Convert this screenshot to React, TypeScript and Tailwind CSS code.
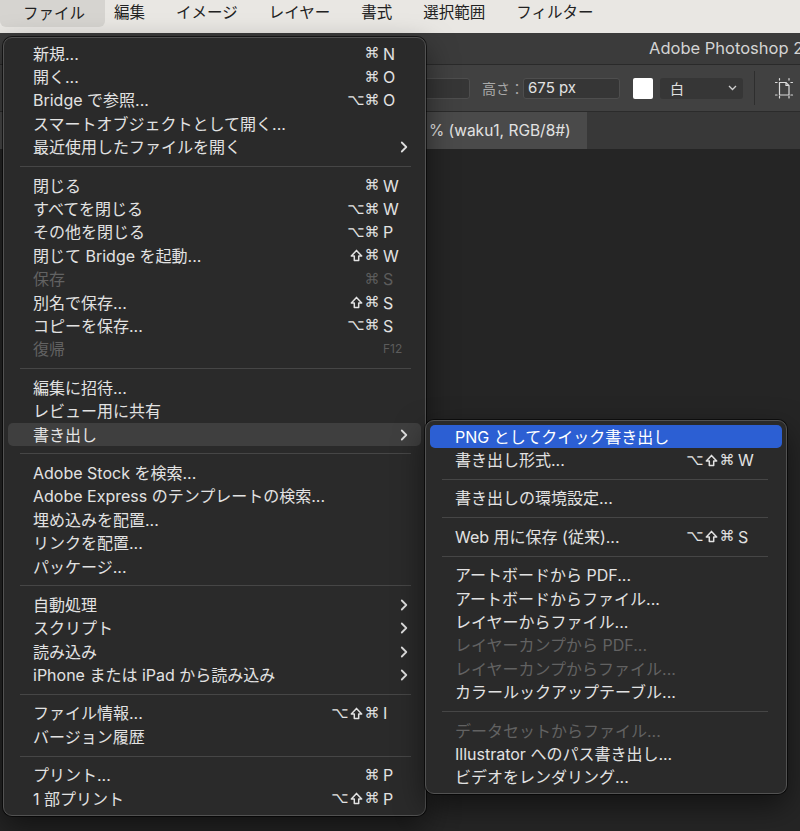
import React from 'react';

type Item =
  | { sep: true }
  | {
      sep?: false;
      label: string;
      mods?: string;
      keyName?: string;
      small?: boolean;
      sub?: boolean;
      disabled?: boolean;
      active?: 'grey' | 'blue';
    };

const SEP: Item = { sep: true };

const fileMenu: Item[] = [
  { label: '新規...', mods: '⌘', keyName: 'N' },
  { label: '開く...', mods: '⌘', keyName: 'O' },
  { label: 'Bridge で参照...', mods: '⌥⌘', keyName: 'O' },
  { label: 'スマートオブジェクトとして開く...' },
  { label: '最近使用したファイルを開く', sub: true },
  SEP,
  { label: '閉じる', mods: '⌘', keyName: 'W' },
  { label: 'すべてを閉じる', mods: '⌥⌘', keyName: 'W' },
  { label: 'その他を閉じる', mods: '⌥⌘', keyName: 'P' },
  { label: '閉じて Bridge を起動...', mods: '⇧⌘', keyName: 'W' },
  { label: '保存', mods: '⌘', keyName: 'S', disabled: true },
  { label: '別名で保存...', mods: '⇧⌘', keyName: 'S' },
  { label: 'コピーを保存...', mods: '⌥⌘', keyName: 'S' },
  { label: '復帰', keyName: 'F12', small: true, disabled: true },
  SEP,
  { label: '編集に招待...' },
  { label: 'レビュー用に共有' },
  { label: '書き出し', sub: true, active: 'grey' },
  SEP,
  { label: 'Adobe Stock を検索...' },
  { label: 'Adobe Express のテンプレートの検索...' },
  { label: '埋め込みを配置...' },
  { label: 'リンクを配置...' },
  { label: 'パッケージ...' },
  SEP,
  { label: '自動処理', sub: true },
  { label: 'スクリプト', sub: true },
  { label: '読み込み', sub: true },
  { label: 'iPhone または iPad から読み込み', sub: true },
  SEP,
  { label: 'ファイル情報...', mods: '⌥⇧⌘', keyName: 'I' },
  { label: 'バージョン履歴' },
  SEP,
  { label: 'プリント...', mods: '⌘', keyName: 'P' },
  { label: '1 部プリント', mods: '⌥⇧⌘', keyName: 'P' },
];

const exportMenu: Item[] = [
  { label: 'PNG としてクイック書き出し', active: 'blue' },
  { label: '書き出し形式...', mods: '⌥⇧⌘', keyName: 'W' },
  SEP,
  { label: '書き出しの環境設定...' },
  SEP,
  { label: 'Web 用に保存 (従来)...', mods: '⌥⇧⌘', keyName: 'S' },
  SEP,
  { label: 'アートボードから PDF...' },
  { label: 'アートボードからファイル...' },
  { label: 'レイヤーからファイル...' },
  { label: 'レイヤーカンプから PDF...', disabled: true },
  { label: 'レイヤーカンプからファイル...', disabled: true },
  { label: 'カラールックアップテーブル...' },
  SEP,
  { label: 'データセットからファイル...', disabled: true },
  { label: 'Illustrator へのパス書き出し...' },
  { label: 'ビデオをレンダリング...' },
];

function Chevron() {
  return (
    <svg width="8" height="12" viewBox="0 0 8 12" fill="none">
      <path d="M1.8 1.5L6.3 6l-4.5 4.5" stroke="#dedede" strokeWidth="1.8" strokeLinecap="round" strokeLinejoin="round" />
    </svg>
  );
}

// shift key drawn, the font glyph is too thin
function ShiftGlyph() {
  return (
    <svg width="13" height="13" viewBox="0 0 13 13" fill="none" className="mx-auto">
      <path d="M6.5 1.4L1.3 7h3v4.6h4.4V7h3z" stroke="currentColor" strokeWidth="1.5" strokeLinejoin="round" />
    </svg>
  );
}

function MenuRow({ item, sub }: { item: Exclude<Item, { sep: true }>; sub?: boolean }) {
  const bg =
    item.active === 'blue' ? 'bg-[#2c5fd3] text-white' : item.active === 'grey' ? 'bg-[#3f3f3f] text-[#e4e4e4]' : 'text-[#e2e2e2]';
  const dim = item.disabled ? 'text-[#626262]' : '';
  return (
    <div className={`flex h-[23.4px] items-center rounded-[5px] leading-none ${sub ? 'pl-[25px] pr-[19px]' : 'pl-[25px] pr-[13px]'} ${bg}`}>
      <span className={`flex-1 whitespace-nowrap text-[16px] ${dim}`}>{item.label}</span>
      {item.keyName && (
        <div className={`flex items-center ${item.disabled ? 'text-[#5c5c5c]' : ''}`}>
          {(item.mods ?? '').split('').map((m, i) => (
            <span key={i} className="flex w-4 justify-center font-['DejaVu_Sans',sans-serif] text-[15px]">
              {m === '⇧' ? <ShiftGlyph /> : m}
            </span>
          ))}
          <span className={`w-[28px] pl-[3px] ${item.small ? 'text-[12px]' : 'text-[16px]'}`}>{item.keyName}</span>
        </div>
      )}
      {item.sub && <Chevron />}
    </div>
  );
}

function Menu({ items, sub }: { items: Item[]; sub?: boolean }) {
  return (
    <>
      {items.map((item, i) =>
        item.sep ? (
          <div key={i} className={`flex h-[15px] items-center ${sub ? 'pl-[12px] pr-[14px]' : 'pl-[12px] pr-[10px]'}`}>
            <div className="h-px flex-1 bg-[#464646]" />
          </div>
        ) : (
          <MenuRow key={i} item={item} sub={sub} />
        )
      )}
    </>
  );
}

function ArtboardIcon() {
  return (
    <svg width="20" height="22" viewBox="0 0 20 22" fill="none" stroke="#dcdcdc" strokeWidth="1.2">
      <path d="M5.5 5.5h6.5l3 3v9.5H5.5z" />
      <path d="M12 5.5v3h3" />
      <path d="M5.5 1.5v1.6M1.5 5.5h1.6M15 1.5v1.6M16.9 5.5h1.6M5.5 19.4V21M1.5 18h1.6M15 19.4V21M16.9 18h1.6" strokeLinecap="round" />
    </svg>
  );
}

export default function App() {
  const topMenus = ['編集', 'イメージ', 'レイヤー', '書式', '選択範囲', 'フィルター'];

  return (
    <div className="relative flex h-[831px] w-[800px] flex-col overflow-hidden bg-[#242424] font-['Inter','Noto_Sans_CJK_JP',sans-serif]">
      {/* macOS menu bar */}
      <div className="flex h-[33px] shrink-0 items-start bg-[#e9e7e3] text-[15.5px] text-[#222]">
        <div className="flex h-[27px] w-[105px] items-center rounded-b-[6px] bg-[#d6d4d0] pl-[23px]">ファイル</div>
        <div className="ml-[9px] flex h-[25px] items-center gap-[31px]">
          {topMenus.map((m) => (
            <span key={m}>{m}</span>
          ))}
        </div>
      </div>

      {/* Photoshop title bar */}
      <div className="flex h-[31px] shrink-0 items-center overflow-hidden whitespace-nowrap bg-[#3b3b3b] pl-[649px] text-[16.5px] text-[#d4d4d4]">
        Adobe Photoshop 2025
      </div>
      <div className="h-px shrink-0 bg-[#2a2a2a]" />

      {/* Options bar */}
      <div className="flex h-[46px] shrink-0 items-center bg-[#414141] pl-[380px]">
        <div className="h-[21px] w-[90px] rounded-[3px] border border-[#4e4e4e] bg-[#363636]" />
        <span className="ml-[12px] w-[40px] whitespace-nowrap text-[14px] text-[#a9a9a9]">高さ：</span>
        <div className="ml-[1px] flex h-[21px] w-[97px] items-center rounded-[3px] border border-[#4e4e4e] bg-[#363636] pl-[4px] text-[15px] text-[#e2e2e2]">
          675 px
        </div>
        <div className="ml-[13px] h-[21px] w-[20px] rounded-[2px] bg-white" />
        <div className="ml-[7px] flex h-[21px] w-[83px] items-center justify-between rounded-[3px] bg-[#363636] pl-[10px] pr-[6px] text-[14px] text-[#e0e0e0]">
          <span>白</span>
          <svg width="9" height="6" viewBox="0 0 9 6" fill="none">
            <path d="M1 1l3.5 3.5L8 1" stroke="#cfcfcf" strokeWidth="1.3" />
          </svg>
        </div>
        <div className="ml-[11px] h-[34px] w-px bg-[#2e2e2e]" />
        <div className="ml-[19px]">
          <ArtboardIcon />
        </div>
      </div>
      <div className="h-px shrink-0 bg-[#2b2b2b]" />

      {/* Document tabs */}
      <div className="flex h-[37px] shrink-0 bg-[#383838]">
        <div className="flex w-[587px] items-center whitespace-nowrap bg-[#4a4a4a] pl-[429px] text-[15.5px] text-[#e2e2e2]">
          % (waku1, RGB/8#)
        </div>
      </div>

      {/* Canvas */}
      <div className="flex-1 bg-[#252525]" />

      {/* File menu */}
      <div className="absolute left-[3px] top-[37px] w-[423px] rounded-[9px] border border-[#525252] bg-[#2a2a2a] px-[4px] pb-[5px] pt-[4px] shadow-[0_0_0_1px_rgba(0,0,0,0.6),0_12px_30px_rgba(0,0,0,0.5)]">
        <Menu items={fileMenu} />
      </div>

      {/* Export submenu */}
      <div className="absolute left-[425px] top-[420px] w-[362px] rounded-[9px] border border-[#525252] bg-[#2a2a2a] px-[4px] pb-[4px] pt-[4px] shadow-[0_0_0_1px_rgba(0,0,0,0.6),0_12px_30px_rgba(0,0,0,0.5)]">
        <Menu items={exportMenu} sub />
      </div>
    </div>
  );
}
